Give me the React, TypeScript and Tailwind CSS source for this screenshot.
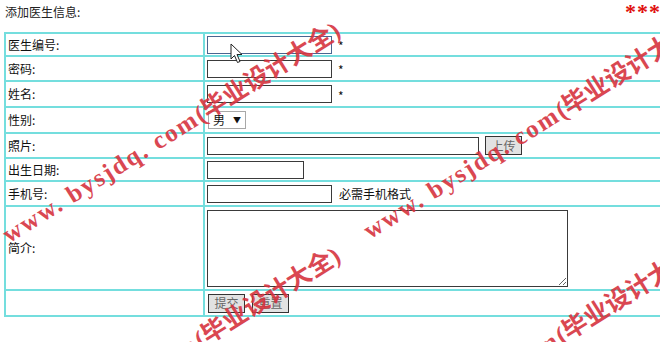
import React from "react";

const cjk = "font-['Noto_Sans_CJK_SC','Noto_Sans',sans-serif]";

const inputCls =
  "h-[18px] border border-[#3a3a3a] bg-white px-1 text-[12px] outline-none";

function Row({
  label,
  h,
  children,
}: {
  label: string;
  h: string;
  children?: React.ReactNode;
}) {
  return (
    <div className={`flex ${h} border-b-2 border-[#74dede]`}>
      <div className="flex w-[199px] shrink-0 items-center border-r-2 border-[#74dede] pl-[2px] text-[12px] text-[#111]">
        {label}
      </div>
      <div className="flex flex-1 items-center pl-[2px] text-[12px] text-[#111]">
        {children}
      </div>
    </div>
  );
}

function Btn({ text }: { text: string }) {
  return (
    <button className="h-[19px] w-[37px] border border-[#333] bg-[#e2e2e2] text-[12px] leading-none text-[#666]">
      {text}
    </button>
  );
}

function Watermark({ pos }: { pos: string }) {
  return (
    <span
      className={`pointer-events-none absolute ${pos} origin-bottom-left rotate-[-32deg] whitespace-nowrap font-['Liberation_Serif','Noto_Sans_CJK_SC',serif] text-[25px] font-bold leading-none text-[#d6343f] opacity-90`}
    >
      <span className="tracking-[2px]">www. bysjdq. com</span>
      <span>(毕业设计大全)</span>
    </span>
  );
}

export default function App() {
  return (
    <div className={`relative h-[342px] w-[660px] overflow-hidden bg-white ${cjk}`}>
      <div className="w-[720px] pl-[4px]">
        <div className="h-[32px] pl-[1px] pt-[4px] text-[12px] leading-[16px] text-[#222]">
          添加医生信息:
        </div>
        <div className="border-l-2 border-t-2 border-[#74dede]">
          <Row label="医生编号:" h="h-[23px]">
            <input className={`${inputCls} w-[125px] border-[#4a6590]`} />
            <span className="ml-[6px] mt-[3px]">*</span>
          </Row>
          <Row label="密码:" h="h-[25px]">
            <input type="password" className={`${inputCls} w-[125px]`} />
            <span className="ml-[6px] mt-[3px]">*</span>
          </Row>
          <Row label="姓名:" h="h-[26px]">
            <input className={`${inputCls} w-[125px]`} />
            <span className="ml-[6px] mt-[3px]">*</span>
          </Row>
          <Row label="性别:" h="h-[26px]">
            <div className="ml-[1px] flex h-[18px] w-[38px] items-center justify-between border border-[#a8a8a8] bg-white pl-[4px] pr-[4px] text-[12px]">
              <span>男</span>
              <span className="text-[8px]">▼</span>
            </div>
          </Row>
          <Row label="照片:" h="h-[25px]">
            <input className={`${inputCls} w-[272px]`} />
            <span className="ml-[6px]">
              <Btn text="上传" />
            </span>
          </Row>
          <Row label="出生日期:" h="h-[23px]">
            <input className={`${inputCls} h-[17px] w-[97px]`} />
          </Row>
          <Row label="手机号:" h="h-[25px]">
            <input className={`${inputCls} w-[125px]`} />
            <span className="ml-[7px]">必需手机格式</span>
          </Row>
          <Row label="简介:" h="h-[84px]">
            <textarea className="h-[77px] w-[361px] border border-[#3a3a3a] bg-white text-[12px] outline-none" />
          </Row>
          <Row label="" h="h-[26px]">
            <div className="ml-[1px] flex gap-[7px]">
              <Btn text="提交" />
              <Btn text="重置" />
            </div>
          </Row>
        </div>
      </div>

      <span className="absolute left-[625px] top-[-5px] font-['Liberation_Serif',serif] text-[22px] font-bold tracking-[1px] text-[#e01010]">
        ***
      </span>

      <svg
        className="pointer-events-none absolute left-[230px] top-[43px]"
        width="14"
        height="21"
        viewBox="0 0 14 21"
      >
        <path
          d="M1 1 L1 16 L4.5 12.5 L7.5 19.5 L10 18.5 L7 11.5 L12 11.5 Z"
          fill="white"
          stroke="#222"
          strokeWidth="1"
          strokeLinejoin="round"
        />
      </svg>

      <Watermark pos="left-[11px] top-[222px]" />
      <Watermark pos="left-[372px] top-[218px]" />
      <Watermark pos="left-[11px] top-[447px]" />
      <Watermark pos="left-[372px] top-[443px]" />
    </div>
  );
}
